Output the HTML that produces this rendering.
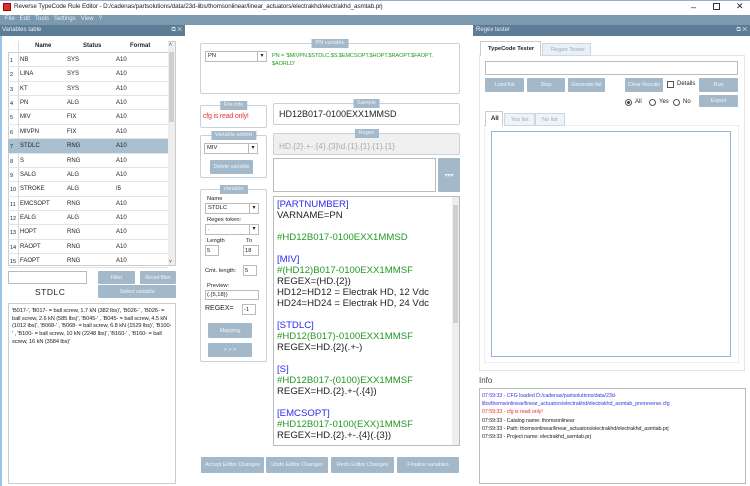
<!DOCTYPE html><html><head><style>
*{box-sizing:border-box;margin:0;padding:0}
body{width:750px;height:486px;overflow:hidden;background:#fff;font-family:"Liberation Sans",sans-serif;font-size:7px;color:#222;position:relative}
.a{position:absolute;white-space:nowrap}
.btn{position:absolute;background:#a3b8c9;color:#eef3f7;font-size:5.6px;display:flex;align-items:center;justify-content:center;border-radius:1px;white-space:nowrap;overflow:hidden;letter-spacing:-0.1px}
.grp{position:absolute;border:1px solid #c5d3de;border-radius:2px}
.gt{position:absolute;top:-5px;left:50%;transform:translateX(-50%);background:#a3b8c9;color:#eef3f7;font-size:5.6px;padding:1px 4px;white-space:nowrap;line-height:7px}
.inp{position:absolute;border:1px solid #bbb;background:#fff;white-space:nowrap;line-height:8px}
.cb{position:absolute;border:1px solid #bbb;background:#fff;font-size:5.8px;padding:0 2px;line-height:9px;white-space:nowrap;overflow:hidden}
.cb:after{content:"▾";position:absolute;right:0;top:0;bottom:0;width:8px;border-left:1px solid #bbb;font-size:6px;text-align:center;background:#fff}
.row{position:absolute;left:8px;width:160px;height:14.36px;font-size:6px;border-bottom:1px solid #e4e4e4}
.row span{position:absolute;top:4px}
.ed div{height:11px;line-height:11px;white-space:nowrap}
.b{color:#2a2aee}.g{color:#229922}
.info div{line-height:8.2px;white-space:nowrap}
</style></head><body>
<div class="a" style="left:0;top:0;width:750px;height:15px;background:#fff;border-top:1px solid #8ab0d8"></div>
<div class="a" style="left:3px;top:3px;width:8px;height:8px;background:#d43030;border:1px solid #a00"></div>
<div class="a" style="left:14px;top:3px;font-size:6.3px;letter-spacing:-0.1px">Reverse TypeCode Rule Editor - D:/cadenas/partsolutions/data/23d-libs/thomsonlinear/linear_actuators/electrakhd/electrakhd_asmtab.prj</div>
<div class="a" style="left:691px;top:2px;font-size:9px">–</div>
<div class="a" style="left:713px;top:3px;width:7px;height:7px;border:1px solid #333"></div>
<div class="a" style="left:736px;top:1px;font-size:9px">✕</div>
<div class="a" style="left:0;top:15px;width:750px;height:10px;background:#7b9ab0;color:#e8eef3;font-size:6px;padding:1px 5px">File &nbsp;&nbsp;Edit &nbsp;&nbsp;Tools &nbsp;&nbsp;Settings &nbsp;&nbsp;View &nbsp;&nbsp;?</div>
<div class="a" style="left:0;top:25px;width:185px;height:11px;background:#5d7d96;color:#e8eef3;font-size:6px;padding:2px 2px">Variables table<span style="position:absolute;right:3px">⧉ ✕</span></div>
<div class="a" style="left:0;top:36px;width:2px;height:450px;background:#9cc4e8"></div>
<div class="a" style="left:473px;top:25px;width:277px;height:11px;background:#5d7d96;color:#e8eef3;font-size:6px;padding:2px 3px">Regex tester<span style="position:absolute;right:3px">⧉ ✕</span></div>
<div class="a" style="left:8px;top:41px;width:168px;height:225px;border:1px solid #ccc"></div>
<div class="a" style="left:8px;top:41px;width:160px;height:12px;background:#fff;border-bottom:1px solid #ccc;font-weight:bold;font-size:6px">
<span class="a" style="left:27px;top:2px">Name</span><span class="a" style="left:75px;top:2px">Status</span><span class="a" style="left:122px;top:2px">Format</span></div>
<div class="a" style="left:8px;top:41px;width:11px;height:224px;border-right:1px solid #ddd"></div>
<div class="a" style="left:168px;top:42px;width:7px;height:223px;background:#eee"></div>
<div class="a" style="left:169px;top:52px;width:5px;height:70px;background:#cfcfcf"></div>
<div class="a" style="left:169px;top:42px;font-size:5px">˄</div>
<div class="a" style="left:169px;top:259px;font-size:5px">˅</div>
<div id="rows"></div>
<script>
var d=[["NB","SYS","A10"],["LINA","SYS","A10"],["KT","SYS","A10"],["PN","ALG","A10"],["MIV","FIX","A10"],["MIVPN","FIX","A10"],["STDLC","RNG","A10"],["S","RNG","A10"],["SALG","ALG","A10"],["STROKE","ALG","I5"],["EMCSOPT","RNG","A10"],["EALG","ALG","A10"],["HOPT","RNG","A10"],["RAOPT","RNG","A10"],["FAOPT","RNG","A10"]];
var h="";d.forEach(function(r,i){var t=53+i*14.36;h+='<div class="row" style="top:'+t+'px;'+(i==6?'background:#a8bfd0;':'')+'"><span style="left:2px;font-size:5.5px;top:5px">'+(i+1)+'</span><span style="left:12px">'+r[0]+'</span><span style="left:59px">'+r[1]+'</span><span style="left:108px">'+r[2]+'</span></div>';});
document.getElementById("rows").innerHTML=h;
</script>
<div class="inp" style="left:8px;top:271px;width:79px;height:13px"></div>
<div class="btn" style="left:98px;top:271px;width:37px;height:13px">Filter</div>
<div class="btn" style="left:140px;top:271px;width:36px;height:13px">Reset filter</div>
<div class="a" style="left:35px;top:287px;font-size:8.5px;letter-spacing:0.5px">STDLC</div>
<div class="btn" style="left:98px;top:285px;width:78px;height:13px">Select variable</div>
<div class="a" style="left:8px;top:303px;width:168px;height:181px;border:1px solid #ccc;padding:4px 3px;font-size:5.7px;line-height:7.7px;white-space:normal;letter-spacing:-0.1px">'B017-', 'B017- = ball screw, 1.7 kN (382 lbs)', 'B026-' , 'B026- = ball screw, 2.6 kN (585 lbs)', 'B045-' , 'B045- = ball screw, 4.5 kN (1012 lbs)', 'B068-' , 'B068- = ball screw, 6.8 kN (1529 lbs)', 'B100-' , 'B100- = ball screw, 10 kN (2248 lbs)', 'B160-' , 'B160- = ball screw, 16 kN (3584 lbs)'</div>
<div class="grp" style="left:200px;top:43px;width:260px;height:51px"><div class="gt">PN variable</div></div>
<div class="cb" style="left:205px;top:51px;width:62px;height:11px">PN</div>
<div class="a g" style="left:272px;top:53px;font-size:5.6px;line-height:7.5px;letter-spacing:-0.1px">PN = '$MIVPN.$STDLC.$S.$EMCSOPT.$HOPT.$RAOPT.$FAOPT.<br>$AORLD'</div>
<div class="grp" style="left:200px;top:105px;width:67px;height:23px"><div class="gt">File info</div></div>
<div class="a" style="left:203px;top:113px;color:#e83030;font-size:7px;letter-spacing:-0.2px">cfg is read only!</div>
<div class="grp" style="left:273px;top:103px;width:187px;height:22px"><div class="gt">Sample</div></div>
<div class="a" style="left:279px;top:109px;font-size:9px">HD12B017-0100EXX1MMSD</div>
<div class="grp" style="left:200px;top:135px;width:67px;height:43px"><div class="gt">Variable added</div></div>
<div class="cb" style="left:204px;top:143px;width:54px;height:11px">MIV</div>
<div class="btn" style="left:210px;top:160px;width:43px;height:14px">Delete variable</div>
<div class="grp" style="left:273px;top:133px;width:187px;height:22px;background:#f0f0f0"><div class="gt">Regex</div></div>
<div class="a" style="left:279px;top:141px;font-size:8.3px;color:#aaa">HD.{2}.+-.{4}.{3}\d.{1}.{1}.{1}.{1}</div>
<div class="a" style="left:273px;top:158px;width:163px;height:34px;border:1px solid #bbb"></div>
<div class="btn" style="left:438px;top:158px;width:22px;height:34px;font-size:6px">▾▾▾</div>
<div class="grp" style="left:200px;top:189px;width:67px;height:173px"><div class="gt">Variable</div></div>
<div class="a" style="left:207px;top:196px;font-size:5.8px">Name</div>
<div class="cb" style="left:205px;top:203px;width:54px;height:11px">STDLC</div>
<div class="a" style="left:207px;top:217px;font-size:5.8px">Regex token:</div>
<div class="cb" style="left:205px;top:224px;width:54px;height:11px">.</div>
<div class="a" style="left:207px;top:238px;font-size:5.8px">Length</div>
<div class="a" style="left:246px;top:238px;font-size:5.8px">To</div>
<div class="inp" style="left:205px;top:245px;width:14px;height:11px;font-size:5.8px;padding:1px">5</div>
<div class="inp" style="left:243px;top:245px;width:16px;height:11px;font-size:5.8px;padding:1px">18</div>
<div class="a" style="left:205px;top:268px;font-size:5.8px">Cmt. length:</div>
<div class="inp" style="left:243px;top:265px;width:14px;height:11px;font-size:5.8px;padding:1px">5</div>
<div class="a" style="left:207px;top:283px;font-size:5.8px">Preview:</div>
<div class="inp" style="left:205px;top:290px;width:54px;height:10px;font-size:5.8px;padding:0 1px">(.{5,18})</div>
<div class="a" style="left:205px;top:305px;font-size:7px">REGEX=</div>
<div class="inp" style="left:242px;top:304px;width:14px;height:11px;font-size:5.8px;padding:1px">-1</div>
<div class="btn" style="left:208px;top:323px;width:44px;height:15px">Mapping</div>
<div class="btn" style="left:208px;top:343px;width:44px;height:14px">&gt; &gt; &gt;</div>
<div class="a ed" style="left:273px;top:196px;width:187px;height:250px;border:1px solid #bbb;padding:2px 3px;font-size:9.6px;overflow:hidden">
<div class="b">[PARTNUMBER]</div><div>VARNAME=PN</div><div></div><div class="g">#HD12B017-0100EXX1MMSD</div><div></div>
<div class="b">[MIV]</div><div class="g">#(HD12)B017-0100EXX1MMSF</div><div>REGEX=(HD.{2})</div><div>HD12=HD12 = Electrak HD, 12 Vdc</div><div>HD24=HD24 = Electrak HD, 24 Vdc</div><div></div>
<div class="b">[STDLC]</div><div class="g">#HD12(B017)-0100EXX1MMSF</div><div>REGEX=HD.{2}(.+-)</div><div></div>
<div class="b">[S]</div><div class="g">#HD12B017-(0100)EXX1MMSF</div><div>REGEX=HD.{2}.+-(.{4})</div><div></div>
<div class="b">[EMCSOPT]</div><div class="g">#HD12B017-0100(EXX)1MMSF</div><div>REGEX=HD.{2}.+-.{4}(.{3})</div>
</div>
<div class="a" style="left:452px;top:197px;width:7px;height:248px;background:#eee"></div>
<div class="a" style="left:453px;top:205px;width:5px;height:118px;background:#cfcfcf"></div>
<div class="btn" style="left:201px;top:457px;width:63px;height:16px">Accept Editor Changes</div>
<div class="btn" style="left:266px;top:457px;width:62px;height:16px">Undo Editor Changes</div>
<div class="btn" style="left:331px;top:457px;width:63px;height:16px">Redo Editor Changes</div>
<div class="btn" style="left:397px;top:457px;width:62px;height:16px">Finalize variables</div>
<div class="a" style="left:479px;top:55px;width:266px;height:316px;border:1px solid #e4e4e4"></div>
<div class="a" style="left:480px;top:41px;width:61px;height:15px;border:1px solid #ccc;border-bottom:none;background:#fff;font-size:5.8px;font-weight:bold;padding:4px 0 0 7px">TypeCode Tester</div>
<div class="a" style="left:542px;top:43px;width:49px;height:13px;border:1px solid #c8d8e4;background:#e8eff5;color:#9ab;font-size:5.8px;padding:3px 0 0 8px">Regex Tester</div>
<div class="inp" style="left:485px;top:61px;width:253px;height:14px"></div>
<div class="btn" style="left:485px;top:78px;width:39px;height:14px">Load list</div>
<div class="btn" style="left:527px;top:78px;width:38px;height:14px">Stop</div>
<div class="btn" style="left:568px;top:78px;width:37px;height:14px">Generate list</div>
<div class="btn" style="left:625px;top:78px;width:38px;height:14px">Clear Results</div>
<div class="a" style="left:667px;top:81px;width:7px;height:7px;border:1px solid #555"></div>
<div class="a" style="left:677px;top:81px;font-size:6px">Details</div>
<div class="btn" style="left:699px;top:78px;width:39px;height:14px">Run</div>
<div class="btn" style="left:699px;top:95px;width:39px;height:12px">Export</div>
<div class="a" style="left:625px;top:99px;width:7px;height:7px;border:1px solid #555;border-radius:50%;background:radial-gradient(#333 35%,#fff 45%)"></div>
<div class="a" style="left:635px;top:99px;font-size:6px">All</div>
<div class="a" style="left:649px;top:99px;width:7px;height:7px;border:1px solid #555;border-radius:50%"></div>
<div class="a" style="left:659px;top:99px;font-size:6px">Yes</div>
<div class="a" style="left:673px;top:99px;width:7px;height:7px;border:1px solid #555;border-radius:50%"></div>
<div class="a" style="left:683px;top:99px;font-size:6px">No</div>
<div class="a" style="left:484px;top:125px;width:255px;height:238px;border:1px dotted #ddd"></div>
<div class="a" style="left:485px;top:111px;width:18px;height:15px;border:1px solid #ccc;border-bottom:none;background:#fff;font-size:6px;font-weight:bold;padding:4px 0 0 5px">All</div>
<div class="a" style="left:504px;top:113px;width:31px;height:13px;border:1px solid #c8d8e4;background:#eef3f7;color:#9ab;font-size:5.6px;padding:3px 0 0 6px">Yes list</div>
<div class="a" style="left:535px;top:113px;width:30px;height:13px;border:1px solid #c8d8e4;background:#eef3f7;color:#9ab;font-size:5.6px;padding:3px 0 0 6px">No list</div>
<div class="a" style="left:491px;top:131px;width:240px;height:226px;border:1px solid #8fb8de"></div>
<div class="a" style="left:479px;top:376px;font-size:8px;color:#444">Info</div>
<div class="a info" style="left:479px;top:388px;width:267px;height:96px;border:1px solid #bbb;padding:3px 2px;font-size:5.4px;letter-spacing:-0.1px">
<div style="color:#3a3ae0">07:59:33 - CFG loaded D:/cadenas/partsolutions/data/23d-</div>
<div style="color:#3a3ae0">libs/thomsonlinear/linear_actuators/electrakhd/electrakhd_asmtab_pnoreverse.cfg</div>
<div style="color:#e83030">07:59:33 - cfg is read only!</div>
<div>07:59:33 - Catalog name: thomsonlinear</div>
<div>07:59:33 - Path: thomsonlinear/linear_actuators/electrakhd/electrakhd_asmtab.prj</div>
<div>07:59:33 - Project name: electrakhd_asmtab.prj</div>
</div>
</body></html>
